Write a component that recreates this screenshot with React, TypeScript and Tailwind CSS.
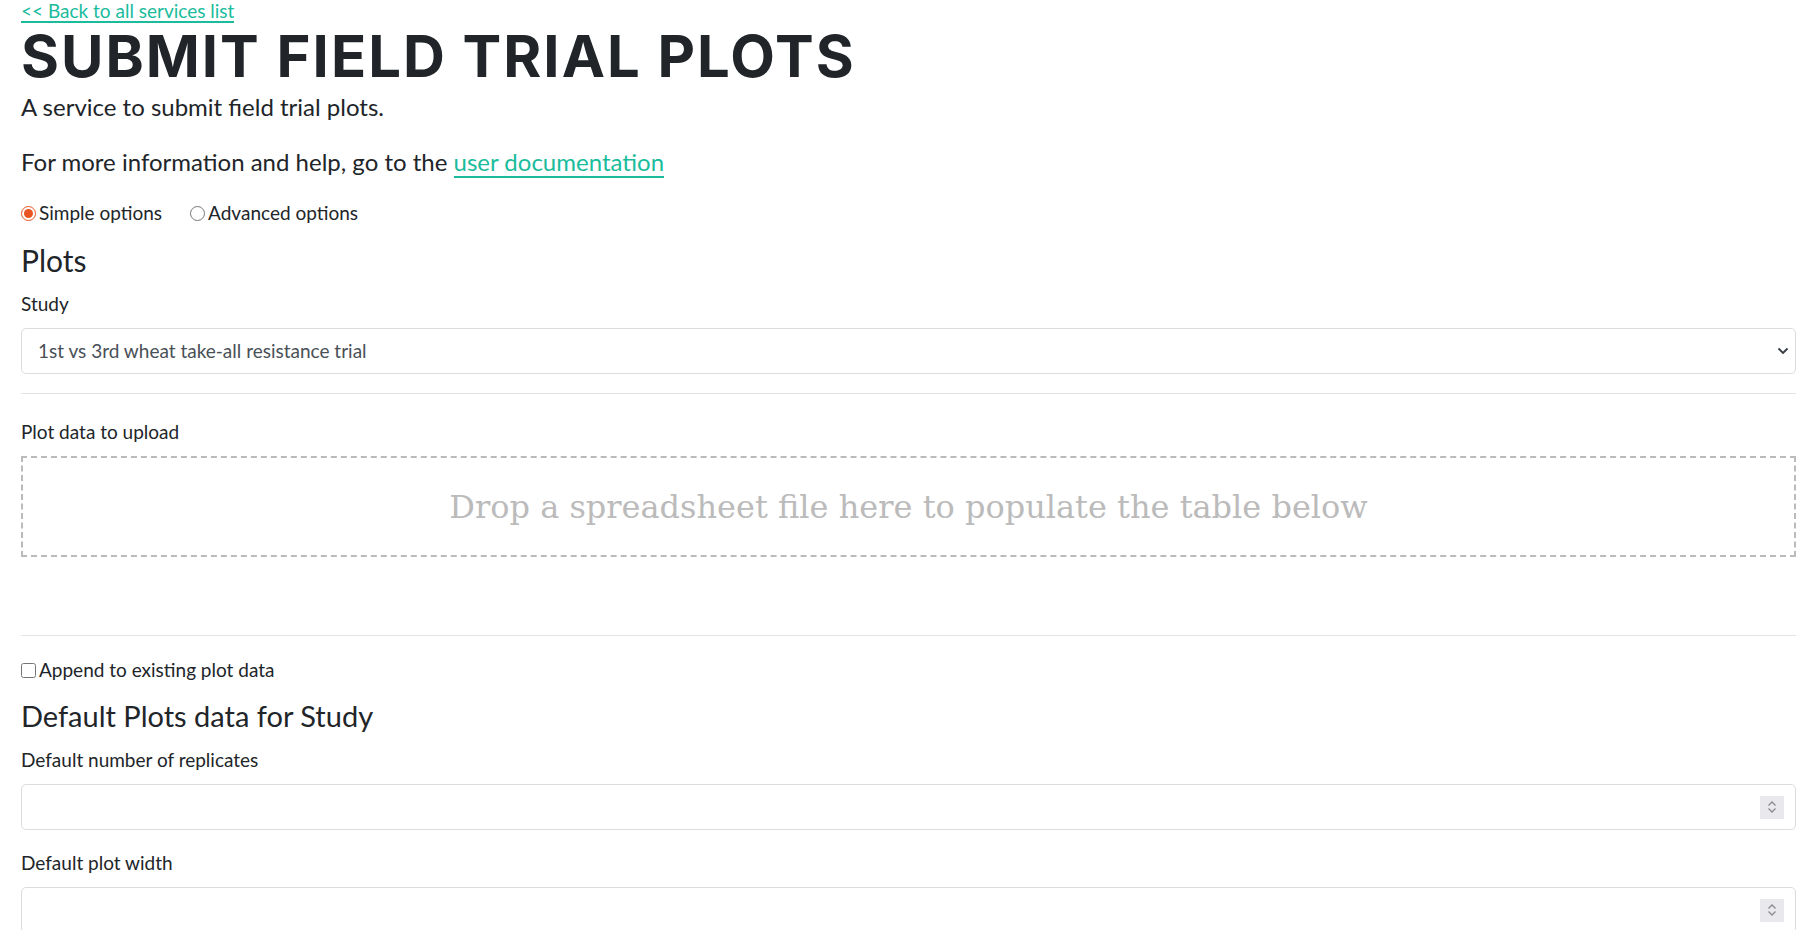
import React, { useState } from "react";

const lato = { fontFamily: "Lato, 'Open Sans', sans-serif" };

function Spinner() {
  return (
    <div className="mr-[11px] flex h-[23px] w-[24px] flex-col items-center justify-center bg-[#e9e9ed]">
      <svg width="10" height="7" viewBox="0 0 10 7" fill="none">
        <path d="M1.5 5.5 L5 2 L8.5 5.5" stroke="#8a8a8f" strokeWidth="1.3" />
      </svg>
      <svg width="10" height="7" viewBox="0 0 10 7" fill="none">
        <path d="M1.5 1.5 L5 5 L8.5 1.5" stroke="#8a8a8f" strokeWidth="1.3" />
      </svg>
    </div>
  );
}

function NumberField({ label }: { label: string }) {
  return (
    <div className="mb-[20px]">
      <label className="mb-[11px] block text-[19px] leading-[26px] text-[#212529]">{label}</label>
      <div className="flex h-[46px] items-center rounded-[5px] border border-[#dcdcdc] bg-white">
        <input type="text" className="h-full flex-1 bg-transparent px-[16px] text-[19px] outline-none" />
        <Spinner />
      </div>
    </div>
  );
}

export default function App() {
  const [mode, setMode] = useState("simple");
  const [append, setAppend] = useState(false);
  const [study, setStudy] = useState("1st vs 3rd wheat take-all resistance trial");

  return (
    <div className="min-h-screen bg-white pl-[21px] pr-[3px] text-[#212529]" style={lato}>
      <a href="#" className="inline-block border-b-2 border-[#1abc9c] text-[19px] leading-[21px] text-[#1abc9c]">
        &lt;&lt; Back to all services list
      </a>

      <h1
        className="text-[58px] font-bold uppercase leading-[64px] tracking-[2px] text-[#212529]"
        style={{ fontFamily: "Inter, 'Open Sans', sans-serif" }}
      >
        Submit Field Trial Plots
      </h1>

      <p className="mt-[4px] text-[24px] leading-[30px]">A service to submit field trial plots.</p>
      <p className="mt-[25px] text-[24px] leading-[30px]">
        For more information and help, go to the{" "}
        <a href="#" className="border-b-2 border-[#1abc9c] text-[#1abc9c]">
          user documentation
        </a>
      </p>

      <div className="mt-[24px] flex items-center gap-[28px] text-[19px] leading-[24px]">
        <label className="flex items-center gap-[3px]">
          <input
            type="radio"
            name="mode"
            checked={mode === "simple"}
            onChange={() => setMode("simple")}
            className="m-0 h-[15px] w-[15px] accent-[#e95420]"
          />
          Simple options
        </label>
        <label className="flex items-center gap-[3px]">
          <input
            type="radio"
            name="mode"
            checked={mode === "advanced"}
            onChange={() => setMode("advanced")}
            className="m-0 h-[15px] w-[15px] accent-[#e95420]"
          />
          Advanced options
        </label>
      </div>

      <h2 className="mt-[17px] text-[30px] leading-[36px]">Plots</h2>

      <label className="mt-[13px] block text-[19px] leading-[26px]">Study</label>
      <div className="mt-[11px] flex h-[46px] items-center rounded-[5px] border border-[#dcdcdc] bg-white pr-[6px]">
        <select
          value={study}
          onChange={(e) => setStudy(e.target.value)}
          className="h-full flex-1 appearance-none bg-transparent px-[16px] text-[19px] text-[#495057] outline-none"
        >
          <option>1st vs 3rd wheat take-all resistance trial</option>
        </select>
        <svg width="12" height="8" viewBox="0 0 12 8" fill="none">
          <path d="M1.5 1.5 L6 6 L10.5 1.5" stroke="#343a40" strokeWidth="1.8" />
        </svg>
      </div>

      <hr className="mt-[19px] border-0 border-t border-[#e3e3e3]" />

      <label className="mt-[25px] block text-[19px] leading-[26px]">Plot data to upload</label>
      <div className="mt-[11px] flex h-[101px] items-center justify-center border-2 border-dashed border-[#bbbbbb]">
        <span className="text-[32px] text-[#bbbbbb]" style={{ fontFamily: "'DejaVu Serif', serif" }}>
          Drop a spreadsheet file here to populate the table below
        </span>
      </div>

      <hr className="mt-[78px] border-0 border-t border-[#e3e3e3]" />

      <label className="mt-[22px] flex items-center gap-[3px] text-[19px] leading-[24px]">
        <input
          type="checkbox"
          checked={append}
          onChange={(e) => setAppend(e.target.checked)}
          className="m-0 h-[15px] w-[15px] accent-[#e95420]"
        />
        Append to existing plot data
      </label>

      <h2 className="mt-[16px] text-[29px] leading-[36px]">Default Plots data for Study</h2>

      <div className="mt-[13px]">
        <NumberField label="Default number of replicates" />
        <NumberField label="Default plot width" />
      </div>
    </div>
  );
}
